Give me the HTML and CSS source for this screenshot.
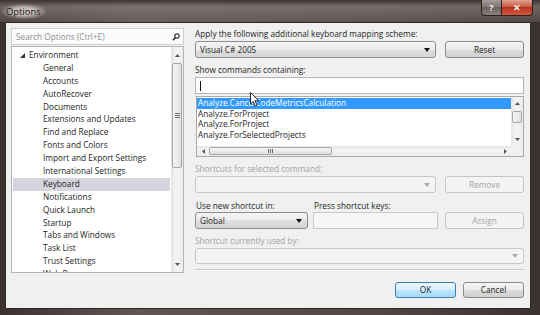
FILE: index.html
```html
<!DOCTYPE html>
<html lang="en">

<head>
    <meta charset="UTF-8">
    <title>Options</title>
    <link rel="stylesheet" href="styles.css">
</head>

<body>
    <div class="window">
        <div class="titlebar">
            <span class="title">Options</span>
            <div class="caption-buttons">
                <span class="cap-help">?</span>
                <span class="cap-close">✕</span>
            </div>
        </div>

        <div class="client">
            <div class="sidebar">
                <div class="search">
                    <span>Search Options (Ctrl+E)</span>
                    <svg width="8" height="8" viewBox="0 0 8 8"><circle cx="5" cy="3" r="2.2" fill="none" stroke="#333" stroke-width="1.2"/><line x1="3.4" y1="4.6" x2="0.8" y2="7.2" stroke="#333" stroke-width="1.5"/></svg>
                </div>
                <div class="tree">
                    <div class="tree-items">
                        <div class="node root">
                            <svg class="expander" width="5" height="5" viewBox="0 0 5 5"><polygon points="5,0 5,5 0,5" fill="#333"/></svg>
                            Environment
                        </div>
                        <div class="node">General</div>
                        <div class="node">Accounts</div>
                        <div class="node">AutoRecover</div>
                        <div class="node">Documents</div>
                        <div class="node">Extensions and Updates</div>
                        <div class="node">Find and Replace</div>
                        <div class="node">Fonts and Colors</div>
                        <div class="node">Import and Export Settings</div>
                        <div class="node">International Settings</div>
                        <div class="node selected">Keyboard</div>
                        <div class="node">Notifications</div>
                        <div class="node">Quick Launch</div>
                        <div class="node">Startup</div>
                        <div class="node">Tabs and Windows</div>
                        <div class="node">Task List</div>
                        <div class="node">Trust Settings</div>
                        <div class="node">Web Browser</div>
                    </div>
                    <div class="vscroll">
                        <div class="sb-arrow"><svg width="5" height="3" viewBox="0 0 5 3"><polygon points="0,3 2.5,0 5,3" fill="#555"/></svg></div>
                        <div class="sb-track">
                            <div class="thumb tall"><span class="grip-v"></span></div>
                        </div>
                        <div class="sb-arrow"><svg width="5" height="3" viewBox="0 0 5 3"><polygon points="0,0 5,0 2.5,3" fill="#555"/></svg></div>
                    </div>
                </div>
            </div>

            <div class="main">
                <div class="label">Apply the following additional keyboard mapping scheme:</div>
                <div class="row first">
                    <div class="combo wide">
                        <span>Visual C# 2005</span>
                        <svg width="6" height="4" viewBox="0 0 6 4"><polygon points="0,0 6,0 3,4" fill="#111"/></svg>
                    </div>
                    <div class="button">Reset</div>
                </div>

                <div class="label gap">Show commands containing:</div>
                <div class="textbox"><span class="caret"></span></div>

                <div class="listbox">
                    <div class="list-items">
                        <div class="item selected">Analyze.CancelCodeMetricsCalculation</div>
                        <div class="item">Analyze.ForProject</div>
                        <div class="item">Analyze.ForProject</div>
                        <div class="item">Analyze.ForSelectedProjects</div>
                    </div>
                    <div class="list-vscroll">
                        <div class="sb-arrow small"><svg width="5" height="3" viewBox="0 0 5 3"><polygon points="0,3 2.5,0 5,3" fill="#555"/></svg></div>
                        <div class="sb-track">
                            <div class="thumb short"></div>
                        </div>
                        <div class="sb-arrow small"><svg width="5" height="3" viewBox="0 0 5 3"><polygon points="0,0 5,0 2.5,3" fill="#555"/></svg></div>
                    </div>
                    <div class="hscroll">
                        <div class="sb-arrow side"><svg width="3" height="5" viewBox="0 0 3 5"><polygon points="3,0 3,5 0,2.5" fill="#555"/></svg></div>
                        <div class="sb-track h">
                            <div class="thumb wide-thumb"><span class="grip-h"></span></div>
                        </div>
                        <div class="sb-arrow side"><svg width="3" height="5" viewBox="0 0 3 5"><polygon points="0,0 3,2.5 0,5" fill="#555"/></svg></div>
                    </div>
                    <div class="corner"></div>
                </div>

                <div class="label disabled gap">Shortcuts for selected command:</div>
                <div class="row">
                    <div class="combo wide disabled">
                        <span></span>
                        <svg width="6" height="4" viewBox="0 0 6 4"><polygon points="0,0 6,0 3,4" fill="#aaa"/></svg>
                    </div>
                    <div class="button disabled">Remove</div>
                </div>

                <div class="label-row">
                    <div class="label shortcut-in">Use new shortcut in:</div>
                    <div class="label">Press shortcut keys:</div>
                </div>
                <div class="row tight">
                    <div class="combo global">
                        <span>Global</span>
                        <svg width="6" height="4" viewBox="0 0 6 4"><polygon points="0,0 6,0 3,4" fill="#111"/></svg>
                    </div>
                    <div class="keys-box"></div>
                    <div class="button disabled">Assign</div>
                </div>

                <div class="label disabled gap">Shortcut currently used by:</div>
                <div class="combo full disabled">
                    <span></span>
                    <svg width="6" height="4" viewBox="0 0 6 4"><polygon points="0,0 6,0 3,4" fill="#aaa"/></svg>
                </div>

                <div class="separator"></div>

                <div class="dialog-buttons">
                    <div class="button default">OK</div>
                    <div class="button">Cancel</div>
                </div>
            </div>
        </div>

        <svg class="cursor" width="10" height="15" viewBox="0 0 10 15">
            <path d="M0.5,0.5 L0.5,12 L3.2,9.4 L5.2,14 L7,13.2 L5,8.8 L8.8,8.8 Z" fill="#fff" stroke="#111" stroke-width="0.9" stroke-linejoin="round"/>
        </svg>
    </div>
</body>

</html>
```

FILE: styles.css
```css
body {
    margin: 0;
    background-color: #3b3332;
    font-family: 'Open Sans', 'Noto Sans', sans-serif;
    font-size: 8.25px;
    color: #1e1e1e;
}

.window {
    position: relative;
    width: 540px;
    height: 315px;
    display: flex;
    flex-direction: column;
    background: linear-gradient(to right, #3a3130, #625654 25%, #514644 70%, #3a3231);
    overflow: hidden;
}

.titlebar {
    height: 22px;
    flex-shrink: 0;
    display: flex;
    align-items: flex-start;
    justify-content: space-between;
    background: linear-gradient(to bottom, #3c3332, rgba(140, 128, 125, 0.65) 30%, rgba(115, 104, 102, 0.4));
}

.title {
    margin: 4px 0 0 2px;
    padding: 1px 5px 1px 4px;
    line-height: 13px;
    font-size: 9.4px;
    color: #262020;
    border-radius: 6px;
    background: radial-gradient(ellipse at center, rgba(205, 198, 195, 0.9) 35%, rgba(160, 150, 148, 0) 75%);
}

.caption-buttons {
    display: flex;
    margin-right: 7px;
}

.cap-help,
.cap-close {
    height: 16px;
    line-height: 15px;
    box-sizing: border-box;
    text-align: center;
    color: #f4eeee;
    font-size: 9px;
    font-weight: bold;
    border: 1px solid #2a2020;
    border-top: none;
}

.cap-help {
    width: 21px;
    border-radius: 0 0 0 4px;
    background: linear-gradient(to bottom, #a59c9a, #7c7270 50%, #6a605e 50%, #8a807e);
}

.cap-close {
    width: 31px;
    border-left: none;
    border-radius: 0 0 4px 0;
    background: linear-gradient(to bottom, #e0a090, #c8533f 50%, #b83220 50%, #d4583e);
}

.client {
    flex: 1;
    margin: 0 9px 6px 5px;
    background-color: #f0f0f0;
    border: 1px solid #2e2625;
    padding: 5px 6px 0 5px;
    display: flex;
    gap: 11px;
}

/* left side */

.sidebar {
    width: 173px;
    display: flex;
    flex-direction: column;
    gap: 1px;
}

.search {
    height: 17px;
    box-sizing: border-box;
    border: 1px solid #cfcfcf;
    background-color: #fbfbfb;
    display: flex;
    align-items: center;
    padding: 0 3px 0 4px;
    color: #8c8c8c;
}

.search span {
    flex: 1;
}

.tree {
    height: 227px;
    box-sizing: border-box;
    border: 1px solid #b4b4b4;
    background-color: #fff;
    display: flex;
}

.tree-items {
    flex: 1;
    padding: 2px 1px 0 1px;
    overflow: hidden;
}

.node {
    height: 12.9px;
    line-height: 12.9px;
    padding-left: 30px;
    white-space: nowrap;
}

.node.root {
    display: flex;
    align-items: center;
    padding-left: 7px;
}

.expander {
    margin-right: 4px;
}

.node.selected {
    background-color: #d5d5df;
}

.vscroll,
.list-vscroll {
    width: 12px;
    display: flex;
    flex-direction: column;
    background: linear-gradient(to right, #e4e4e4, #f4f4f4 40%, #ececec);
}

.sb-arrow {
    height: 16px;
    display: flex;
    align-items: center;
    justify-content: center;
}

.sb-arrow.small {
    height: 13px;
}

.sb-track {
    flex: 1;
    padding: 0 1px;
}

.thumb {
    box-sizing: border-box;
    border: 1px solid #a6a6a6;
    border-radius: 2px;
    background: linear-gradient(to right, #f6f6f6, #e0e0e0);
    display: flex;
    align-items: center;
    justify-content: center;
}

.thumb.tall {
    height: 105px;
}

.thumb.short {
    height: 12px;
    margin-top: 1px;
}

.grip-v {
    width: 5px;
    height: 5px;
    background: repeating-linear-gradient(to bottom, #6e6e6e 0, #6e6e6e 1px, transparent 1px, transparent 2px);
}

/* right side */

.main {
    flex: 1;
    display: flex;
    flex-direction: column;
}

.label {
    height: 12px;
    line-height: 12px;
    white-space: nowrap;
}

.label.gap {
    margin-top: 6px;
}

.label.disabled {
    color: #a4a4a4;
}

.row {
    display: flex;
    gap: 9px;
    height: 17px;
    margin-top: 1px;
}

.row.tight {
    gap: 0;
    margin-top: 0;
}

.combo {
    box-sizing: border-box;
    height: 17px;
    border: 1px solid #8d8d8d;
    border-radius: 3px;
    background: linear-gradient(to bottom, #f4f4f4, #ececec 50%, #dfdfdf 50%, #d6d6d6);
    display: flex;
    align-items: center;
    padding: 0 5px 0 4px;
}

.combo span {
    flex: 1;
}

.combo.wide {
    width: 241px;
}

.combo.global {
    width: 113px;
    margin-right: 5px;
}

.combo.full {
    height: 16px;
    margin-top: 1px;
}

.combo.disabled {
    border-color: #c6c6c6;
    background: #f4f4f4;
}

.button {
    box-sizing: border-box;
    width: 79px;
    height: 17px;
    line-height: 15px;
    text-align: center;
    border: 1px solid #8a8a8a;
    border-radius: 3px;
    background: linear-gradient(to bottom, #f4f4f4, #ebebeb 50%, #dcdcdc 50%, #d0d0d0);
}

.button.disabled {
    color: #a4a4a4;
    border-color: #c4c4c4;
    background: #f4f4f4;
}

.textbox {
    box-sizing: border-box;
    height: 17px;
    margin-top: 1px;
    border: 1px solid #b4b4b4;
    background-color: #fff;
    display: flex;
    align-items: center;
    padding-left: 4px;
}

.caret {
    width: 1px;
    height: 10px;
    background-color: #111;
}

.listbox {
    box-sizing: border-box;
    height: 61px;
    margin: 2px 0 0 1px;
    border: 1px solid #a9a9a9;
    background-color: #fff;
    display: grid;
    grid-template-columns: 1fr 12px;
    grid-template-rows: 1fr 10px;
}

.list-items {
    padding-top: 1px;
    overflow: hidden;
}

.item {
    height: 10.6px;
    line-height: 10.6px;
    padding-left: 1px;
    white-space: nowrap;
}

.item.selected {
    background-color: #3399ff;
    color: #fff;
}

.hscroll {
    display: flex;
    background: linear-gradient(to bottom, #e4e4e4, #f4f4f4 40%, #ececec);
}

.hscroll .sb-arrow {
    height: auto;
    width: 12px;
}

.sb-track.h {
    padding: 1px 0;
}

.thumb.wide-thumb {
    width: 123px;
    height: 100%;
    background: linear-gradient(to bottom, #f6f6f6, #e0e0e0);
}

.grip-h {
    width: 5px;
    height: 4px;
    background: repeating-linear-gradient(to right, #6e6e6e 0, #6e6e6e 1px, transparent 1px, transparent 2px);
}

.corner {
    background-color: #f0f0f0;
}

.label-row {
    display: flex;
    margin-top: 7px;
    padding-left: 1px;
}

.shortcut-in {
    width: 118px;
}

.keys-box {
    box-sizing: border-box;
    width: 125px;
    height: 17px;
    margin-right: 7px;
    border: 1px solid #c8c8c8;
    background-color: #f6f6f6;
}

.separator {
    height: 1px;
    margin-top: 5px;
    background-color: #cacaca;
    border-bottom: 1px solid #fafafa;
}

.dialog-buttons {
    display: flex;
    justify-content: flex-end;
    gap: 7px;
    margin-top: 11px;
}

.dialog-buttons .button {
    width: 61px;
    height: 16px;
    line-height: 14px;
}

.button.default {
    border-color: #3c7fb1;
    background: linear-gradient(to bottom, #eaf6fd, #d9effc 50%, #bee6fd 50%, #a7d9f5);
}

.cursor {
    position: absolute;
    left: 250px;
    top: 92px;
}
```
